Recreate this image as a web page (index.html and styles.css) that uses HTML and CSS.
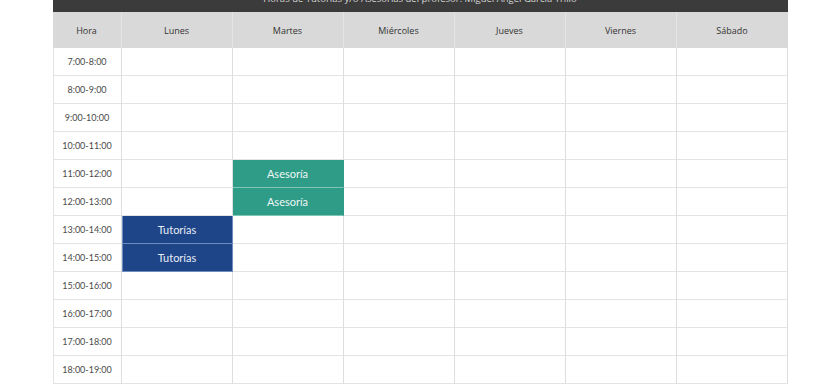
FILE: index.html
```html
<!DOCTYPE html>
<html lang="es">
<head>
<meta charset="utf-8">
<title>Horario</title>
<link rel="stylesheet" href="styles.css">
</head>
<body>
<div class="schedule">
  <div class="title">Horas de Tutorías y/o Asesorías del profesor: Miguel Ángel García Trillo</div>
  <div class="grid">
    <div class="th">Hora</div><div class="th">Lunes</div><div class="th">Martes</div><div class="th">Miércoles</div><div class="th">Jueves</div><div class="th">Viernes</div><div class="th last">Sábado</div>

    <div class="td time">7:00-8:00</div><div class="td"></div><div class="td"></div><div class="td"></div><div class="td"></div><div class="td"></div><div class="td"></div>
    <div class="td time">8:00-9:00</div><div class="td"></div><div class="td"></div><div class="td"></div><div class="td"></div><div class="td"></div><div class="td"></div>
    <div class="td time">9:00-10:00</div><div class="td"></div><div class="td"></div><div class="td"></div><div class="td"></div><div class="td"></div><div class="td"></div>
    <div class="td time">10:00-11:00</div><div class="td"></div><div class="td"></div><div class="td"></div><div class="td"></div><div class="td"></div><div class="td"></div>
    <div class="td time">11:00-12:00</div><div class="td"></div><div class="td teal">Asesoría</div><div class="td"></div><div class="td"></div><div class="td"></div><div class="td"></div>
    <div class="td time">12:00-13:00</div><div class="td"></div><div class="td teal">Asesoría</div><div class="td"></div><div class="td"></div><div class="td"></div><div class="td"></div>
    <div class="td time">13:00-14:00</div><div class="td blue">Tutorías</div><div class="td"></div><div class="td"></div><div class="td"></div><div class="td"></div><div class="td"></div>
    <div class="td time">14:00-15:00</div><div class="td blue">Tutorías</div><div class="td"></div><div class="td"></div><div class="td"></div><div class="td"></div><div class="td"></div>
    <div class="td time">15:00-16:00</div><div class="td"></div><div class="td"></div><div class="td"></div><div class="td"></div><div class="td"></div><div class="td"></div>
    <div class="td time">16:00-17:00</div><div class="td"></div><div class="td"></div><div class="td"></div><div class="td"></div><div class="td"></div><div class="td"></div>
    <div class="td time">17:00-18:00</div><div class="td"></div><div class="td"></div><div class="td"></div><div class="td"></div><div class="td"></div><div class="td"></div>
    <div class="td time">18:00-19:00</div><div class="td"></div><div class="td"></div><div class="td"></div><div class="td"></div><div class="td"></div><div class="td"></div>
  </div>
</div>
</body>
</html>
```
FILE: styles.css
```css
html, body {
  margin: 0;
  padding: 0;
  background: #ffffff;
  overflow: hidden;
}

.schedule {
  width: 735px;
  margin: -14px auto 0;
  font-family: Lato, "Open Sans", "Liberation Sans", sans-serif;
}

.title {
  height: 26px;
  line-height: 26px;
  background: #3b3b3b;
  color: #d6d6d6;
  font-family: "Open Sans", "Liberation Sans", sans-serif;
  font-size: 9.5px;
  text-align: center;
  white-space: nowrap;
}

.grid {
  display: grid;
  grid-template-columns: 69px repeat(6, 111px);
  grid-template-rows: 36px;
  grid-auto-rows: 28px;
}

.th {
  background: #d9d9d9;
  border-right: 1px solid #e4e4e4;
  box-sizing: border-box;
  display: flex;
  align-items: center;
  justify-content: center;
  font-family: "Open Sans", "Liberation Sans", sans-serif;
  font-size: 9px;
  color: #333333;
}

.th.last {
  border-right: none;
}

.td {
  box-sizing: border-box;
  border-right: 1px solid #dedede;
  border-bottom: 1px solid #e3e3e3;
  display: flex;
  align-items: center;
  justify-content: center;
  font-size: 10px;
  color: #444444;
}

.time {
  border-left: 1px solid #e3e3e3;
  font-size: 9px;
  color: #4a4a4a;
}

.teal {
  background: #2f9c87;
  color: #eef7f5;
  border-right-color: #2f9c87;
  border-bottom-color: #82c6b8;
  font-size: 11px;
}

.blue {
  background: #1f4589;
  color: #e8edf6;
  border: 1px solid #6f8cc0;
  border-top: none;
  font-size: 11px;
}
```
